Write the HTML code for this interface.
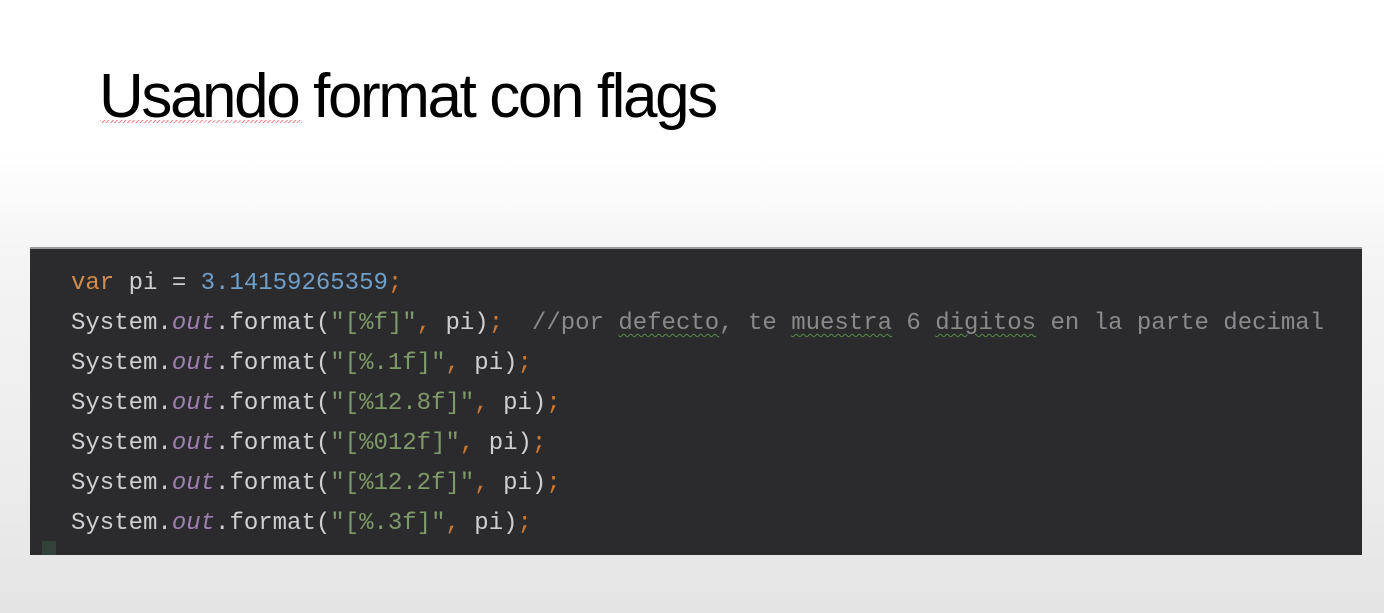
<!DOCTYPE html>
<html><head><meta charset="utf-8"><style>
html,body{margin:0;padding:0}
body{width:1384px;height:613px;overflow:hidden;position:relative;background:linear-gradient(to bottom,#ffffff 0px,#ffffff 150px,#f4f4f4 260px,#ececec 480px,#e4e4e4 613px);font-family:"Liberation Sans",sans-serif}
.title{position:absolute;left:99px;top:62px;font-size:62px;letter-spacing:-2.4px;color:#000;line-height:70px;white-space:nowrap}
.sq{position:absolute;left:100px;top:120px;width:202px;height:3px;background:repeating-linear-gradient(135deg,#e88 0 1px,transparent 1px 3px)}
.code{position:absolute;left:30px;top:247px;width:1332px;height:306px;background:#2b2b2d;border-top:2px solid #9a9a9a}
.ln{position:absolute;left:41px;font-family:"Liberation Mono",monospace;font-size:24px;color:#cfcfcf;white-space:pre;line-height:30px}
.k{color:#cf8e4e}.n{color:#6f9fc8}.o{color:#9f7fb0;font-style:italic}.s{color:#7f9a6a}.p{color:#cc7832}.c{color:#8a8a8a}
.w{text-decoration:underline wavy #5a8a4a;text-underline-offset:4px;text-decoration-thickness:1px}
.cur{position:absolute;left:12px;top:292px;width:14px;height:14px;background:#34403a}
</style></head><body>
<div class="title">Usando format con flags</div>
<div class="sq"></div>
<div class="code">
<div class="ln" style="top:20px"><span class="k">var</span> pi = <span class="n">3.14159265359</span><span class="p">;</span></div>
<div class="ln" style="top:60px">System.<span class="o">out</span>.format(<span class="s">"[%f]"</span><span class="p">,</span> pi)<span class="p">;</span>  <span class="c">//por <span class="w">defecto</span>, te <span class="w">muestra</span> 6 <span class="w">digitos</span> en la parte decimal</span></div>
<div class="ln" style="top:100px">System.<span class="o">out</span>.format(<span class="s">"[%.1f]"</span><span class="p">,</span> pi)<span class="p">;</span></div>
<div class="ln" style="top:140px">System.<span class="o">out</span>.format(<span class="s">"[%12.8f]"</span><span class="p">,</span> pi)<span class="p">;</span></div>
<div class="ln" style="top:180px">System.<span class="o">out</span>.format(<span class="s">"[%012f]"</span><span class="p">,</span> pi)<span class="p">;</span></div>
<div class="ln" style="top:220px">System.<span class="o">out</span>.format(<span class="s">"[%12.2f]"</span><span class="p">,</span> pi)<span class="p">;</span></div>
<div class="ln" style="top:260px">System.<span class="o">out</span>.format(<span class="s">"[%.3f]"</span><span class="p">,</span> pi)<span class="p">;</span></div>
<div class="cur"></div>
</div>
</body></html>
